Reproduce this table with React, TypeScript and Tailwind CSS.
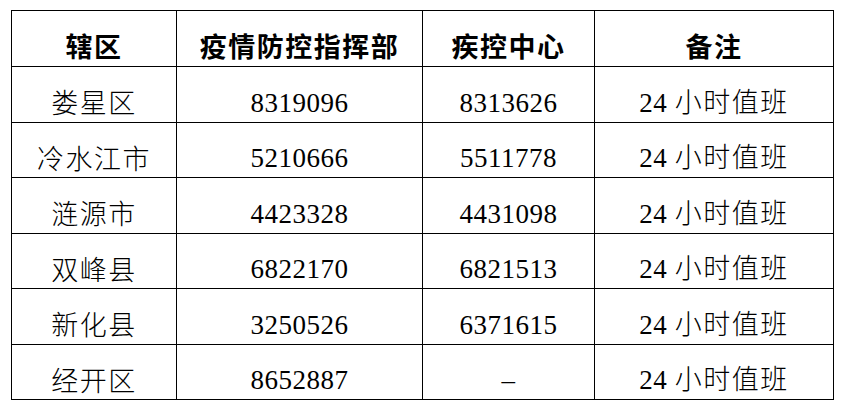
const rows = [
  { area: "娄星区", hq: "8319096", cdc: "8313626" },
  { area: "冷水江市", hq: "5210666", cdc: "5511778" },
  { area: "涟源市", hq: "4423328", cdc: "4431098" },
  { area: "双峰县", hq: "6822170", cdc: "6821513" },
  { area: "新化县", hq: "3250526", cdc: "6371615" },
  { area: "经开区", hq: "8652887", cdc: "-" },
];

const heights = ["h-[56px]", "h-[55px]", "h-[56px]", "h-[55px]", "h-[56px]", "h-[55px]"];

const cell = "border border-black pt-[14px] text-center align-middle leading-none";
const num = "font-['Liberation_Serif','Tinos','Times_New_Roman','DejaVu_Serif',serif] tracking-[0.5px]";

export default function App() {
  return (
    <div className="h-[409px] w-[842px] bg-white pl-[11px] pt-[10px] font-['Noto_Sans_CJK_SC',sans-serif] text-[27px] tracking-[1.5px] text-black">
      <table className="w-[822px] table-fixed border-collapse">
        <colgroup>
          <col className="w-[165px]" />
          <col className="w-[246px]" />
          <col className="w-[172px]" />
          <col className="w-[239px]" />
        </colgroup>
        <thead>
          <tr className="h-[56px]">
            <th className={cell + " font-semibold"}>辖区</th>
            <th className={cell + " font-semibold"}>疫情防控指挥部</th>
            <th className={cell + " font-semibold"}>疾控中心</th>
            <th className={cell + " font-semibold"}>备注</th>
          </tr>
        </thead>
        <tbody className="font-light">
          {rows.map((r, i) => (
            <tr key={r.area} className={heights[i]}>
              <td className={cell}>{r.area}</td>
              <td className={cell}>
                <span className={num}>{r.hq}</span>
              </td>
              <td className={cell}>
                <span className={num}>{r.cdc === "-" ? "–" : r.cdc}</span>
              </td>
              <td className={cell}>
                <span className={num}>24</span> 小时值班
              </td>
            </tr>
          ))}
        </tbody>
      </table>
    </div>
  );
}
